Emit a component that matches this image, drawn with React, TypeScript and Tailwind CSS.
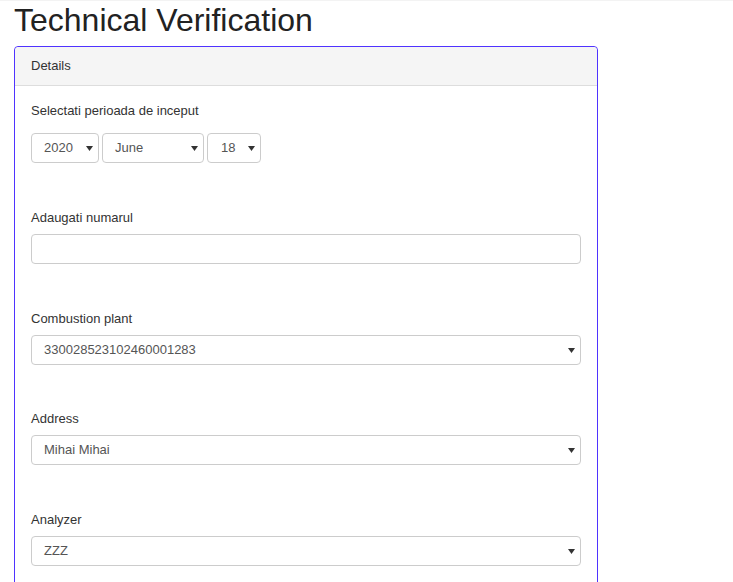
import React from 'react';

const Caret: React.FC = () => (
  <svg width="7" height="5" viewBox="0 0 7 5" className="shrink-0">
    <path d="M0 0 H7 L3.5 5 Z" fill="#333" />
  </svg>
);

const FakeSelect: React.FC<{ value: string; className?: string }> = ({ value, className }) => (
  <div
    className={`h-[30px] flex items-center justify-between border border-[#ccc] rounded-[4px] bg-white pl-[12px] pr-[5px] text-[13px] text-[#555] ${className ?? ''}`}
  >
    <span>{value}</span>
    <Caret />
  </div>
);

const Field: React.FC<{ label: string; className?: string; children: React.ReactNode }> = ({ label, className, children }) => (
  <div className={className ?? 'mt-[46px]'}>
    <div className="text-[13px] leading-[18px] text-[#333] mb-[7px]">{label}</div>
    {children}
  </div>
);

export default function App() {
  return (
    <div className="min-h-screen bg-white font-['Liberation_Sans',Arial,sans-serif] overflow-hidden">
      <div className="h-px bg-[#f3f3f3]" />
      <div className="px-[14px]">
        <h1 className="text-[32px] leading-[34px] text-[#222] mt-[2px] mb-[9px] font-normal">
          Technical Verification
        </h1>

        {/* Details panel */}
        <div className="w-[584px] border border-[#4f33ff] rounded-t-[4px] min-h-[600px]">
          <div className="bg-[#f5f5f5] border-b border-[#ddd] rounded-t-[4px] px-[16px] h-[39px] flex items-center text-[13px] text-[#333]">
            Details
          </div>

          <div className="px-[16px] pt-[16px]">
            <div className="text-[13px] leading-[18px] text-[#333] mb-[13px]">Selectati perioada de inceput</div>
            <div className="flex gap-[3px]">
              <FakeSelect value="2020" className="w-[68px]" />
              <FakeSelect value="June" className="w-[102px]" />
              <FakeSelect value="18" className="w-[54px] pl-[13px]" />
            </div>

            <Field label="Adaugati numarul">
              <div className="h-[30px] border border-[#ccc] rounded-[4px] bg-white" />
            </Field>

            <Field label="Combustion plant">
              <FakeSelect value="330028523102460001283" />
            </Field>

            <Field label="Address" className="mt-[45px]">
              <FakeSelect value="Mihai Mihai" />
            </Field>

            <Field label="Analyzer">
              <FakeSelect value="ZZZ" />
            </Field>
          </div>
        </div>
      </div>
    </div>
  );
}
